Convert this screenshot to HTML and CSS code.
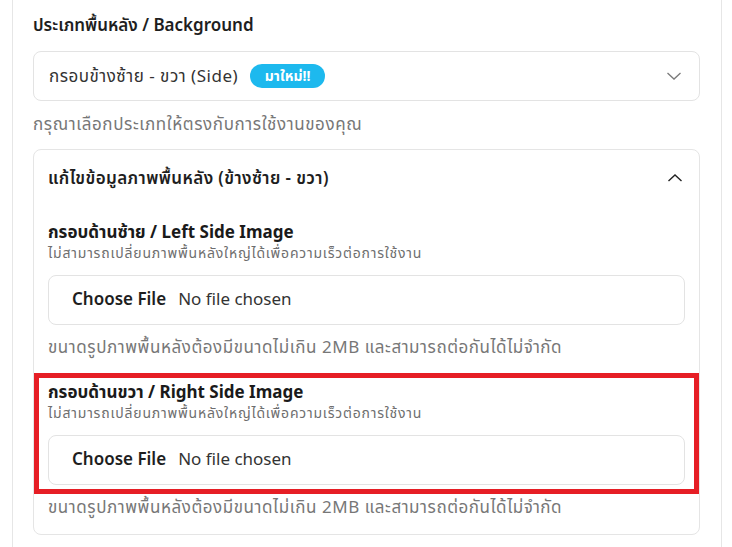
FILE: index.html
```html
<!DOCTYPE html>
<html lang="th">
<head>
<meta charset="utf-8">
<title>Background settings</title>
<link rel="stylesheet" href="styles.css">
</head>
<body>
<div class="panel">
  <div class="field-title">ประเภทพื้นหลัง / Background</div>
  <div class="select">
    <span class="select-value">กรอบข้างซ้าย - ขวา (Side)</span>
    <span class="badge">มาใหม่!!</span>
    <svg class="chev chev-down" width="16" height="16" viewBox="0 0 16 16"><polyline points="1.5,5 8,11 14.5,5" fill="none" stroke="#7a7a7a" stroke-width="1.3"/></svg>
  </div>
  <div class="hint">กรุณาเลือกประเภทให้ตรงกับการใช้งานของคุณ</div>

  <div class="card">
    <div class="card-head">
      <span class="card-title">แก้ไขข้อมูลภาพพื้นหลัง (ข้างซ้าย - ขวา)</span>
      <svg class="chev chev-up" width="16" height="16" viewBox="0 0 16 16"><polyline points="1.5,11 8,5 14.5,11" fill="none" stroke="#222" stroke-width="1.4"/></svg>
    </div>
    <div class="card-body">
      <div class="upload">
        <div class="upload-label">กรอบด้านซ้าย / Left Side Image</div>
        <div class="upload-sub">ไม่สามารถเปลี่ยนภาพพื้นหลังใหญ่ได้เพื่อความเร็วต่อการใช้งาน</div>
        <div class="filebox"><span class="file-btn">Choose File</span><span class="file-name">No file chosen</span></div>
      </div>
      <div class="help">ขนาดรูปภาพพื้นหลังต้องมีขนาดไม่เกิน 2MB และสามารถต่อกันได้ไม่จำกัด</div>

      <div class="upload upload-second">
        <div class="upload-label">กรอบด้านขวา / Right Side Image</div>
        <div class="upload-sub">ไม่สามารถเปลี่ยนภาพพื้นหลังใหญ่ได้เพื่อความเร็วต่อการใช้งาน</div>
        <div class="filebox"><span class="file-btn">Choose File</span><span class="file-name">No file chosen</span></div>
        <div class="highlight"></div>
      </div>
      <div class="help">ขนาดรูปภาพพื้นหลังต้องมีขนาดไม่เกิน 2MB และสามารถต่อกันได้ไม่จำกัด</div>
    </div>
  </div>
</div>
</body>
</html>
```
FILE: styles.css
```css
* { box-sizing: border-box; }
html, body { margin: 0; padding: 0; background: #fff; }
body {
  font-family: "Noto Sans", "Noto Sans Thai", "Noto Sans Thai UI", sans-serif;
  color: #1e1e1e;
  font-size: 17px;
}
.panel {
  margin-left: 12px;
  width: 710px;
  height: 547px;
  border-left: 1px solid #e6e6e6;
  border-right: 1px solid #e6e6e6;
  padding: 13px 21px 0 20px;
}
.field-title {
  line-height: 24px;
  font-weight: 600;
  color: #1e1e1e;
}
.select {
  margin-top: 14px;
  height: 50px;
  border: 1px solid #e3e3e3;
  border-radius: 8px;
  display: flex;
  align-items: center;
  padding: 0 17px 0 15px;
}
.select-value { color: #333; line-height: 24px; letter-spacing: 0.5px; }
.badge {
  margin-left: 12px;
  height: 24px;
  width: 75px;
  border-radius: 12px;
  background: #1db9ee;
  color: #fff;
  font-size: 14px;
  font-weight: 700;
  display: flex;
  align-items: center;
  justify-content: center;
}
.chev { margin-left: auto; flex: none; }
.hint {
  margin-top: 11px;
  line-height: 24px;
  color: #777;
  letter-spacing: 0.6px;
}
.card {
  margin-top: 13px;
  border: 1px solid #e5e5e5;
  border-radius: 8px;
  padding: 0 14px 15px 14px;
}
.card-head {
  height: 55px;
  display: flex;
  align-items: center;
  padding-right: 2px;
}
.card-title { font-weight: 600; line-height: 24px; color: #1e1e1e; letter-spacing: 0.4px; }
.card-body { padding-top: 15px; }
.upload { position: relative; }
.upload-second { margin-top: 21px; }
.upload-label { font-weight: 700; line-height: 24px; color: #1a1a1a; }
.upload-sub { font-size: 14px; line-height: 18px; color: #6e6e6e; letter-spacing: 0.8px; }
.filebox {
  margin-top: 13px;
  height: 50px;
  border: 1px solid #e3e3e3;
  border-radius: 8px;
  display: flex;
  align-items: center;
  padding: 0 0 3px 23px;
}
.file-btn { font-weight: 600; color: #1e1e1e; margin-right: 12px; }
.file-name { color: #333; }
.help {
  margin-top: 10px;
  line-height: 24px;
  color: #777;
  letter-spacing: 0.55px;
}
.highlight {
  position: absolute;
  top: -7px;
  left: -14px;
  right: -14px;
  bottom: -9px;
  border: 5px solid #e61e25;
  pointer-events: none;
}
```
